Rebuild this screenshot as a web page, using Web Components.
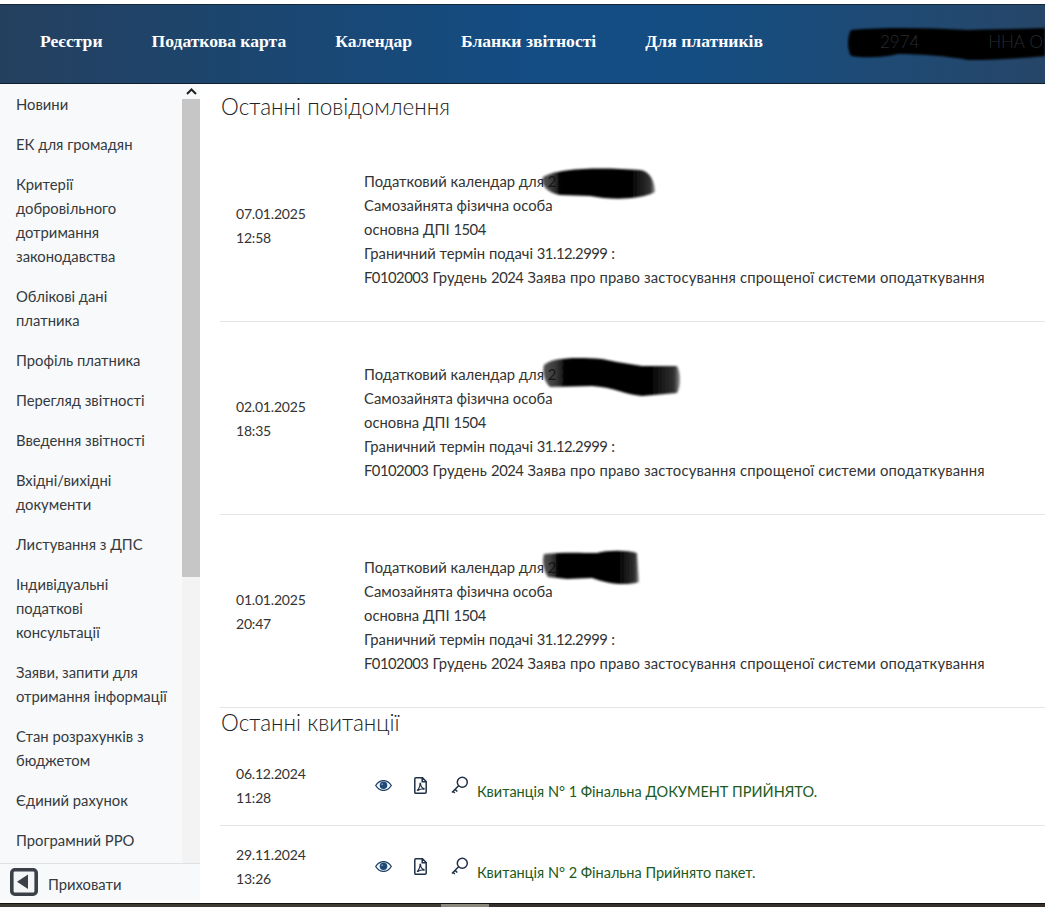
<!DOCTYPE html>
<html lang="uk">
<head>
<meta charset="utf-8">
<title>Кабінет</title>
<style>
html, body { margin: 0; height: 100%; overflow: hidden; background: #fff; }
body { font-family: Lato, "Open Sans", sans-serif; color: #333; }
</style>
</head>
<body>
<tax-cabinet></tax-cabinet>

<script>
// redaction scribble, drawn over the text
class InkBlot extends HTMLElement {
  connectedCallback() {
    const w = this.getAttribute('w');
    const h = this.getAttribute('h');
    const id = 'fade';
    const shadow = this.attachShadow({ mode: 'open' });
    shadow.innerHTML = `
<style>
:host { position: absolute; left: ${this.getAttribute('x')}px; top: ${this.getAttribute('y')}px; display: block; pointer-events: none; }
svg { display: block; overflow: visible; }
</style>
<svg width="${w}" height="${h}" viewBox="0 0 ${w} ${h}">
  <defs>
    <linearGradient id="${id}">
      <stop offset="0" stop-color="#111" stop-opacity=".72"/>
      <stop offset=".09" stop-color="#111" stop-opacity=".82"/>
      <stop offset=".16" stop-color="#030303"/>
      <stop offset=".8" stop-color="#060606"/>
      <stop offset=".96" stop-color="#333"/>
      <stop offset="1" stop-color="#777" stop-opacity=".8"/>
    </linearGradient>
    <filter id="b" x="-10%" y="-30%" width="120%" height="160%"><feGaussianBlur stdDeviation="1"/></filter>
  </defs>
  <path filter="url(#b)" fill="url(#${id})" d="${this.getAttribute('d')}"/>
</svg>`;
  }
}
customElements.define('ink-blot', InkBlot);

const navTemplate = document.createElement('template');
navTemplate.innerHTML = `
<style>
:host { display: block; position: relative; height: 80px; margin-top: 4px; border-top: 1px solid #14283c; border-bottom: 1px solid #10202f; box-sizing: border-box;
  background: linear-gradient(90deg, #25405f 0%, #1b4670 25%, #134d84 52%, #134d82 66%, #1f4a74 85%, #264668 100%); }
nav { display: flex; align-items: center; gap: 49px; height: 100%; padding: 0 0 6px 40px; box-sizing: border-box; }
::slotted(a) { color: #fff; font: 700 17.600px "Liberation Serif", "DejaVu Serif", serif; text-decoration: none; }
.blot { position: absolute; left: 848px; top: 22px; width: 197px; height: 34px; }
.blot svg { display: block; overflow: visible; }
.user { position: absolute; left: 880px; top: 26px; right: 2px; display: flex; justify-content: space-between; color: #262c34; font-size: 17px; font-weight: 300; white-space: nowrap; }
</style>
<nav><slot></slot></nav>
<div class="blot"><svg width="197" height="34" viewBox="0 0 197 34"><filter id="nb" x="-5%" y="-20%" width="110%" height="140%"><feGaussianBlur stdDeviation="1.2"/></filter><path filter="url(#nb)" fill="#030303" d="M3 3 C40 0 80 1 120 3 C150 2 175 2 197 1 V29 C175 31 150 33 120 33 C100 29 70 27 50 27 C35 31 15 31 3 29 C-1 22 -1 10 3 3Z"/></svg></div>
<div class="user"><span>2974</span><span>ННА О</span></div>
`;
class TopNav extends HTMLElement {
  connectedCallback() {
    this.attachShadow({ mode: 'open' }).appendChild(navTemplate.content.cloneNode(true));
  }
}
customElements.define('top-nav', TopNav);

const sideTemplate = document.createElement('template');
sideTemplate.innerHTML = `
<style>
:host { display: flex; flex-direction: column; width: 200px; flex: none; margin-bottom: 3px; background: #f8f9fa; }
.scroll { flex: 1; min-height: 0; display: flex; }
.items { flex: 1; min-width: 0; overflow: hidden; }
.bar { width: 18px; flex: none; background: #f3f3f3; display: flex; flex-direction: column; }
.arrow { height: 15px; display: flex; justify-content: center; align-items: center; background: #f8f9fa; }
.thumb { height: 478px; background: #c6c6c6; }
.foot { display: flex; align-items: center; gap: 10px; height: 37px; box-sizing: border-box; padding-left: 10px; border-top: 1px solid #dfe1e3; background: #f8f9fa; font-size: 14.800px; color: #343a40; }
.foot span { padding-top: 4px; }
svg { display: block; flex: none; }
</style>
<div class="scroll">
  <div class="items"><slot></slot></div>
  <div class="bar">
    <div class="arrow"><svg width="11" height="7" viewBox="0 0 11 7"><path d="M1 6 L5.500 1.500 L10 6" fill="none" stroke="#222" stroke-width="2"/></svg></div>
    <div class="thumb"></div>
  </div>
</div>
<div class="foot">
  <svg width="28" height="28" viewBox="0 0 28 28"><rect x="1.800" y="1.800" width="24.400" height="24.400" rx="3" fill="#f4f5f6" stroke="#3b4048" stroke-width="3.600"/><path d="M18 6.500 V21 L7 13.800Z" fill="#3b4048"/></svg>
  <span><slot name="foot"></slot></span>
</div>
`;
class SideMenu extends HTMLElement {
  connectedCallback() {
    this.attachShadow({ mode: 'open' }).appendChild(sideTemplate.content.cloneNode(true));
  }
}
customElements.define('side-menu', SideMenu);

const itemTemplate = document.createElement('template');
itemTemplate.innerHTML = `
<style>
:host { display: block; padding: 8px 13.500px 8px 16px; font-size: 14.800px; line-height: 24px; color: #343a40; }
</style>
<slot></slot>
`;
class MenuItem extends HTMLElement {
  connectedCallback() {
    this.attachShadow({ mode: 'open' }).appendChild(itemTemplate.content.cloneNode(true));
  }
}
customElements.define('menu-item', MenuItem);

const msgTemplate = document.createElement('template');
msgTemplate.innerHTML = `
<style>
:host { display: flex; align-items: center; position: relative; height: 193px; box-sizing: border-box; border-bottom: 1px solid #e4e5e7; font-size: 14.800px; line-height: 24px; color: #333; }
.date { width: 144px; padding: 2px 0 0 16px; box-sizing: border-box; flex: none; font-size: 14px; letter-spacing: -.2px; }
.text { padding-top: 8px; white-space: nowrap; }
</style>
<div class="date"><slot name="date"></slot></div>
<div class="text"><slot></slot></div>
<slot name="over"></slot>
`;
class MessageRow extends HTMLElement {
  connectedCallback() {
    this.attachShadow({ mode: 'open' }).appendChild(msgTemplate.content.cloneNode(true));
  }
}
customElements.define('message-row', MessageRow);

const receiptTemplate = document.createElement('template');
receiptTemplate.innerHTML = `
<style>
:host { display: flex; align-items: center; height: 81px; box-sizing: border-box; border-bottom: 1px solid #e4e5e7; font-size: 14px; line-height: 24px; color: #333; }
.date { width: 144px; padding: 2px 0 0 16px; box-sizing: border-box; flex: none; letter-spacing: -.2px; }
.icons { display: flex; align-items: center; gap: 22px; width: 113px; flex: none; padding-left: 11px; box-sizing: border-box; }
.label { color: #1c5a1c; padding-top: 14px; white-space: nowrap; font-size: 14.500px; }
svg { display: block; flex: none; }
</style>
<div class="date"><slot name="date"></slot></div>
<div class="icons">
  <svg width="17" height="11" viewBox="0 0 17 11"><path d="M.7 5.500 C3 2 5.600 .6 8.500 .6 S14 2 16.300 5.500 C14 9 11.400 10.400 8.500 10.400 S3 9 .7 5.500Z" fill="#fff" stroke="#1d3f66" stroke-width="1.300"/><circle cx="8.500" cy="5.300" r="3.800" fill="#1d4a78"/><circle cx="7.200" cy="4.200" r=".9" fill="#7f9bb8"/></svg>
  <svg width="13" height="17" viewBox="0 0 13 17"><path d="M1.800 .8 H8.500 L12.200 4.500 V15 Q12.200 16.200 11 16.200 H1.800 Q.8 16.200 .8 15 V2 Q.8 .8 1.800 .8Z M8.200 1 V4.800 H12" fill="none" stroke="#1f3147" stroke-width="1.500"/><path d="M3 13.600 C5 12 6.300 8.500 6 6.500 C5.800 6 6.800 6 6.700 7 C6.500 9 8 11.300 10 11.500 C10.600 11.800 10 12.300 9.500 12.100 C7.500 11.700 5.500 12 3.800 13.600" fill="none" stroke="#1f3147" stroke-width="1.100"/></svg>
  <svg width="18" height="18" viewBox="0 0 18 18" style="margin-left:2px"><circle cx="11.300" cy="6.200" r="5" fill="none" stroke="#1f3147" stroke-width="1.500"/><path d="M7.600 9.700 L1 16.500 M4 13.400 L6.300 15.500 M2 15.300 L3.800 17" fill="none" stroke="#1f3147" stroke-width="1.500"/></svg>
</div>
<div class="label"><slot></slot></div>
`;
class ReceiptRow extends HTMLElement {
  connectedCallback() {
    this.attachShadow({ mode: 'open' }).appendChild(receiptTemplate.content.cloneNode(true));
  }
}
customElements.define('receipt-row', ReceiptRow);

const titleTemplate = document.createElement('template');
titleTemplate.innerHTML = `
<style>
:host { display: block; font-size: 22.500px; font-weight: 300; line-height: 30px; color: #222; }
</style>
<slot></slot>
`;
class SectionTitle extends HTMLElement {
  connectedCallback() {
    this.attachShadow({ mode: 'open' }).appendChild(titleTemplate.content.cloneNode(true));
  }
}
customElements.define('section-title', SectionTitle);

const appTemplate = document.createElement('template');
appTemplate.innerHTML = `
<style>
:host { display: flex; flex-direction: column; height: 907px; overflow: hidden; }
.body { flex: 1; min-height: 0; display: flex; }
main { flex: 1; min-width: 0; padding: 8px 0 0 21px; overflow: hidden; }
main message-row, main receipt-row { margin-left: -1px; }
.strip { height: 4px; flex: none; box-sizing: border-box; border-top: 1px solid #141210; background: linear-gradient(90deg, #3f3a33 0, #3f3a33 441px, #8a867c 441px, #8a867c 489px, #35302b 489px, #35302b 100%); }
.msgs { margin: 7px 0 0; }
.nr { letter-spacing: -.5px; }
.wide { letter-spacing: .17px; }
</style>
<top-nav>
  <a href="#">Реєстри</a>
  <a href="#">Податкова карта</a>
  <a href="#">Календар</a>
  <a href="#">Бланки звітності</a>
  <a href="#">Для платників</a>
</top-nav>
<div class="body">
  <side-menu>
    <menu-item>Новини</menu-item>
    <menu-item>ЕК для громадян</menu-item>
    <menu-item>Критерії добровільного дотримання законодавства</menu-item>
    <menu-item>Облікові дані платника</menu-item>
    <menu-item>Профіль платника</menu-item>
    <menu-item>Перегляд звітності</menu-item>
    <menu-item>Введення звітності</menu-item>
    <menu-item>Вхідні/вихідні документи</menu-item>
    <menu-item>Листування з ДПС</menu-item>
    <menu-item>Індивідуальні податкові консультації</menu-item>
    <menu-item>Заяви, запити для отримання інформації</menu-item>
    <menu-item>Стан розрахунків з бюджетом</menu-item>
    <menu-item>Єдиний рахунок</menu-item>
    <menu-item>Програмний РРО</menu-item>
    <span slot="foot">Приховати</span>
  </side-menu>
  <main>
    <section-title>Останні повідомлення</section-title>
    <div class="msgs">
      <message-row>
        <span slot="date">07.01.2025<br>12:58</span>
        Податковий календар для 2<br>Самозайнята фізична особа<br>основна ДПІ <span class="nr">1504</span><br>Граничний термін подачі <span class="nr">31.12.2999</span> :<br><span class="wide"><span class="nr">F0102003</span> Грудень <span class="nr">2024</span> Заява про право застосування спрощеної системи оподаткування</span>
        <ink-blot slot="over" x="320" y="38" w="115" h="33" d="M3 10 C18 1 60 0 100 3 C110 4 115 15 115 25 C100 33 70 33 50 29 L20 28 C8 26 0 18 3 10Z"></ink-blot>
      </message-row>
      <message-row>
        <span slot="date">02.01.2025<br>18:35</span>
        Податковий календар для 2<br>Самозайнята фізична особа<br>основна ДПІ <span class="nr">1504</span><br>Граничний термін подачі <span class="nr">31.12.2999</span> :<br><span class="wide"><span class="nr">F0102003</span> Грудень <span class="nr">2024</span> Заява про право застосування спрощеної системи оподаткування</span>
        <ink-blot slot="over" x="322" y="35" w="138" h="40" d="M2 8 C10 1 30 0 60 2 L75 5 L100 9 L135 9 C139 15 139 30 135 36 L100 39 C85 38 70 30 50 29 L8 30 C2 25 0 14 2 8Z"></ink-blot>
      </message-row>
      <message-row>
        <span slot="date">01.01.2025<br>20:47</span>
        Податковий календар для 2<br>Самозайнята фізична особа<br>основна ДПІ <span class="nr">1504</span><br>Граничний термін подачі <span class="nr">31.12.2999</span> :<br><span class="wide"><span class="nr">F0102003</span> Грудень <span class="nr">2024</span> Заява про право застосування спрощеної системи оподаткування</span>
        <ink-blot slot="over" x="322" y="35" w="98" h="35" d="M2 4 C20 2 40 3 55 3 C65 0 85 0 95 3 L97 32 C85 36 65 34 50 28 L25 29 L6 27 C1 20 0 10 2 4Z"></ink-blot>
      </message-row>
    </div>
    <section-title style="margin-bottom:7px">Останні квитанції</section-title>
    <receipt-row>
      <span slot="date">06.12.2024<br>11:28</span>
      Квитанція N° 1 Фінальна ДОКУМЕНТ ПРИЙНЯТО.
    </receipt-row>
    <receipt-row>
      <span slot="date">29.11.2024<br>13:26</span>
      Квитанція N° 2 Фінальна Прийнято пакет.
    </receipt-row>
  </main>
</div>
<div class="strip"></div>
`;
class TaxCabinet extends HTMLElement {
  connectedCallback() {
    this.attachShadow({ mode: 'open' }).appendChild(appTemplate.content.cloneNode(true));
  }
}
customElements.define('tax-cabinet', TaxCabinet);
</script>
</body>
</html>
